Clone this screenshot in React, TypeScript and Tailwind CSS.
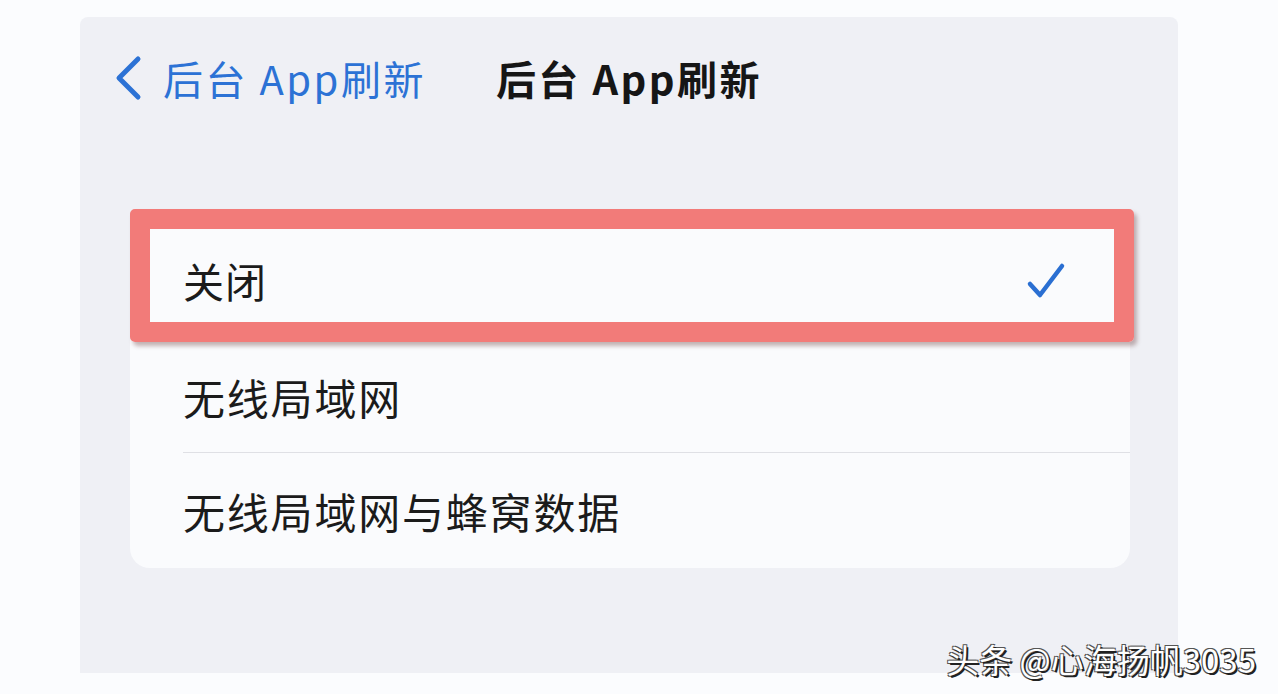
import React from "react";

const cjk = { fontFamily: '"Noto Sans CJK SC", "Noto Sans", sans-serif' };

export default function App() {
  return (
    <div className="relative w-[1278px] h-[694px] bg-[#fbfcfe] pl-[80px] pt-[17px] overflow-hidden" style={cjk}>
      <div className="w-[1098px] h-[656px] bg-[#eff0f5] rounded-t-[8px] flex flex-col">
        <div className="grid grid-cols-[1fr_auto_1fr] items-center h-[122px]">
          <div className="flex items-center pl-[33px] gap-[20px] text-[#2c72d5]">
            <svg width="30" height="46" viewBox="0 0 30 46" fill="none">
              <path d="M25 4 L6 23 L25 42" stroke="#2c72d5" strokeWidth="5" strokeLinecap="round" strokeLinejoin="round" />
            </svg>
            <span className="text-[40px] leading-none tracking-[2.5px]">后台 App刷新</span>
          </div>
          <div className="text-[40px] leading-none font-bold tracking-[2.5px] text-[#161616]">后台 App刷新</div>
          <div />
        </div>
        <div className="relative ml-[50px] mt-[83px] w-[1000px] bg-[#fafbfd] rounded-[20px] flex flex-col">
          <div className="h-[118px] flex items-center justify-between pl-[53px] pr-[64px]">
            <span className="text-[41px] tracking-[1px] text-[#1b1b1b]">关闭</span>
            <svg width="40" height="38" viewBox="0 0 40 38" fill="none">
              <path d="M4 22 L14 33 L36 4" stroke="#2a6fd2" strokeWidth="4.5" strokeLinecap="round" strokeLinejoin="round" />
            </svg>
          </div>
          <div className="ml-[53px]">
            <div className="h-[113px] flex items-center border-b border-[#dfe0e5]">
              <span className="text-[42px] tracking-[1.8px] text-[#1b1b1b]">无线局域网</span>
            </div>
            <div className="h-[115px] flex items-center">
              <span className="text-[42px] tracking-[1.8px] text-[#1b1b1b]">无线局域网与蜂窝数据</span>
            </div>
          </div>
          <div className="absolute left-0 top-[-13px] w-[1004px] h-[133px] border-[20px] border-[#f27b79] rounded-[5px] shadow-[3px_4px_4px_rgba(90,40,40,0.35)]" />
        </div>
      </div>
      <div
        className="absolute right-[22px] bottom-[18px] text-[33px] leading-none text-white"
        style={{ textShadow: "2px 2px 0 #222, -1px -1px 0 #555, 1px -1px 0 #555, -1px 1px 0 #555" }}
      >
        头条 @心海扬帆3035
      </div>
    </div>
  );
}
